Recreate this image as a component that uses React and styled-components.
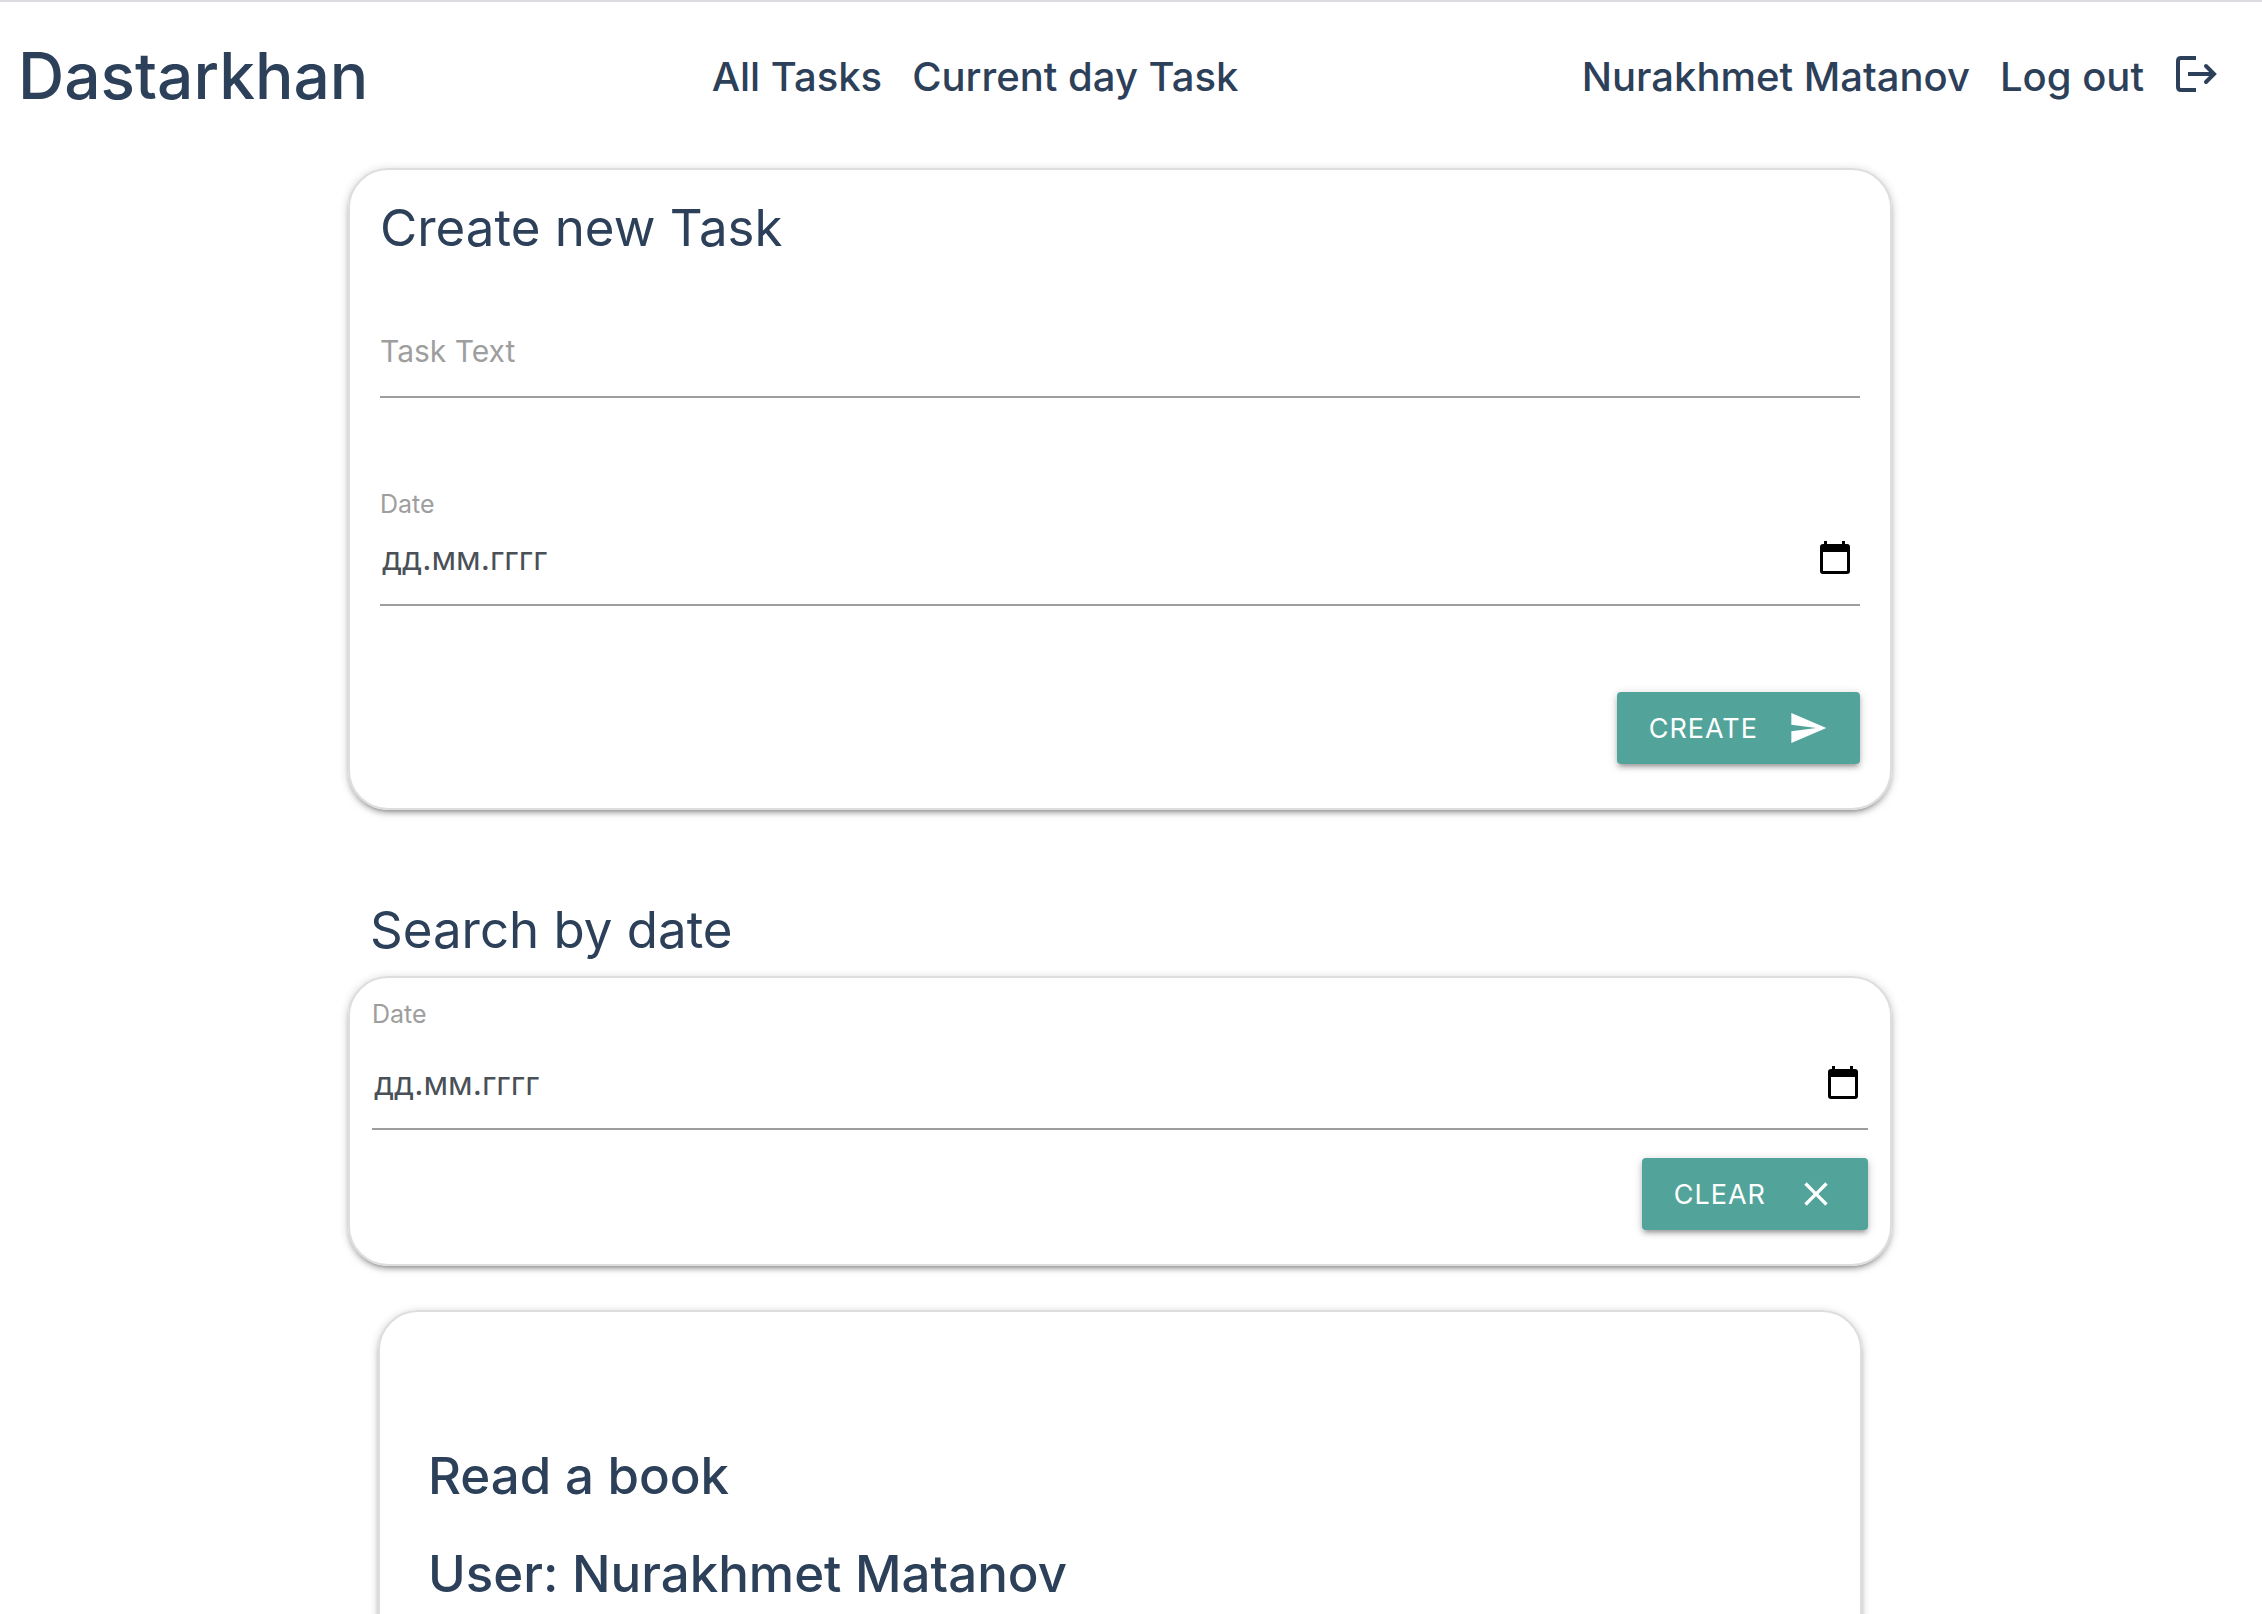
import React, { useState } from "react";
import styled, { createGlobalStyle } from "styled-components";

const Global = createGlobalStyle`
  * { box-sizing: border-box; }
  body {
    margin: 0;
    background: #fff;
    color: #2d4059;
    font-family: Inter, "Open Sans", "Liberation Sans", sans-serif;
  }
`;

const Page = styled.div`
  border-top: 2px solid #dcdbe0;
  padding-right: 22px;
  height: 100vh;
  overflow: hidden;
`;

const Header = styled.header`
  display: flex;
  justify-content: space-between;
  align-items: center;
  height: 148px;
  padding: 0 22px 0 18px;
`;

const Brand = styled.a`
  color: inherit;
  text-decoration: none;
  font-size: 64px;
  line-height: 76px;
  font-weight: 500;
`;

const Nav = styled.nav`
  display: flex;
  align-items: center;
  gap: 30px;
`;

const NavLink = styled.a`
  display: flex;
  align-items: center;
  gap: 30px;
  color: inherit;
  text-decoration: none;
  font-size: 40px;
  font-weight: 500;
`;

const Main = styled.main`
  width: 70%;
  margin: 0 auto;
  padding: 18px 12px 0;
`;

const Card = styled.section`
  display: flex;
  flex-direction: column;
  margin: ${(p) => p.$margin || "0"};
  padding: ${(p) => p.$padding};
  border: 2px solid #ddd;
  border-radius: 40px;
  box-shadow: 0 4px 4px rgba(0, 0, 0, 0.14), 0 6px 2px -4px rgba(0, 0, 0, 0.12),
    0 2px 10px rgba(0, 0, 0, 0.2);
`;

const Heading = styled.h2`
  margin: 0;
  font-size: 51px;
  line-height: 60px;
  font-weight: 400;
`;

const SearchHeading = styled(Heading)`
  margin: 90px 22px 16px;
`;

const Field = styled.div`
  display: flex;
  flex-direction: column;
  margin-top: ${(p) => p.$top};
`;

const Label = styled.label`
  color: #9e9e9e;
  font-size: 25px;
  line-height: 32px;
  font-weight: 400;
`;

const Control = styled.div`
  display: flex;
  align-items: center;
  height: ${(p) => p.$height};
  padding: ${(p) => p.$padding};
  border-bottom: 2px solid #9e9e9e;
`;

const Input = styled.input`
  flex: 1;
  min-width: 0;
  padding: ${(p) => (p.$date ? "0 2px" : "0")};
  border: 0;
  outline: 0;
  background: none;
  color: #495057;
  font-family: inherit;
  font-size: ${(p) => (p.$date ? "32px" : "30px")};
  font-weight: 400;
  &::placeholder {
    color: ${(p) => (p.$date ? "#495057" : "#9e9e9e")};
    opacity: 1;
  }
`;

const IconButton = styled.button`
  display: flex;
  padding: 0;
  border: 0;
  background: none;
  color: #000;
  cursor: pointer;
`;

const Button = styled.button`
  display: flex;
  align-items: center;
  align-self: flex-end;
  gap: 30px;
  height: 72px;
  margin-top: ${(p) => p.$top};
  padding: 0 32px;
  border: 0;
  border-radius: 4px;
  background: #52a49a;
  color: #fff;
  font-family: inherit;
  font-size: 27px;
  font-weight: 400;
  letter-spacing: 1px;
  cursor: pointer;
  box-shadow: 0 4px 4px rgba(0, 0, 0, 0.14), 0 6px 2px -4px rgba(0, 0, 0, 0.12),
    0 2px 10px rgba(0, 0, 0, 0.2);
`;

const TaskLine = styled.p`
  margin: 0 0 38px;
  font-size: 51px;
  line-height: 60px;
  font-weight: 500;
`;

const LogoutIcon = () => (
  <svg width="44" height="44" viewBox="0 0 44 44" fill="none" stroke="currentColor" strokeWidth="4" aria-hidden="true">
    <path d="M22 4H7Q4 4 4 7V33Q4 36 7 36H22" />
    <path d="M14 20H39" />
    <path d="M32 12L40 20L32 28" strokeLinecap="round" />
  </svg>
);

const CalendarIcon = () => (
  <svg width="34" height="36" viewBox="0 0 34 36" fill="currentColor" aria-hidden="true">
    <path fillRule="evenodd" d="M6 1H9V4H24V1H27V4H29Q32 4 32 7V31Q32 34 29 34H5Q2 34 2 31V7Q2 4 5 4H6ZM5 12V31H29V12Z" />
  </svg>
);

const SendIcon = () => (
  <svg width="40" height="40" viewBox="0 0 24 24" fill="currentColor" aria-hidden="true">
    <path d="M2.01 21L23 12 2.01 3 2 10l15 2-15 2z" />
  </svg>
);

const CloseIcon = () => (
  <svg width="40" height="40" viewBox="0 0 24 24" fill="currentColor" aria-hidden="true">
    <path d="M19 6.41L17.59 5 12 10.59 6.41 5 5 6.41 10.59 12 5 17.59 6.41 19 12 13.41 17.59 19 19 17.59 13.41 12z" />
  </svg>
);

function DateField({ id, top, height, padding, value, onChange }) {
  return (
    <Field $top={top}>
      <Label htmlFor={id}>Date</Label>
      <Control $height={height} $padding={padding}>
        <Input id={id} $date placeholder="дд.мм.гггг" value={value} onChange={(e) => onChange(e.target.value)} />
        <IconButton type="button" aria-label="Open calendar">
          <CalendarIcon />
        </IconButton>
      </Control>
    </Field>
  );
}

export default function App() {
  const [text, setText] = useState("");
  const [date, setDate] = useState("");
  const [search, setSearch] = useState("");
  return (
    <Page>
      <Global />
      <Header>
        <Brand href="#">Dastarkhan</Brand>
        <Nav>
          <NavLink href="#all">All Tasks</NavLink>
          <NavLink href="#today">Current day Task</NavLink>
        </Nav>
        <Nav>
          <NavLink href="#profile">Nurakhmet Matanov</NavLink>
          <NavLink href="#logout">
            Log out
            <LogoutIcon />
          </NavLink>
        </Nav>
      </Header>
      <Main>
        <Card $padding="28px 30px 44px">
          <Heading>Create new Task</Heading>
          <Field $top="60px">
            <Control $height="80px" $padding="0 0 12px">
              <Input aria-label="Task Text" placeholder="Task Text" value={text} onChange={(e) => setText(e.target.value)} />
            </Control>
          </Field>
          <DateField id="task-date" top="90px" height="86px" padding="0 8px 8px 0" value={date} onChange={setDate} />
          <Button type="button" $top="86px">
            CREATE
            <SendIcon />
          </Button>
        </Card>
        <SearchHeading>Search by date</SearchHeading>
        <Card $padding="20px 22px 34px">
          <DateField id="search-date" top="0" height="100px" padding="8px 8px 0 0" value={search} onChange={setSearch} />
          <Button type="button" $top="28px" onClick={() => setSearch("")}>
            CLEAR
            <CloseIcon />
          </Button>
        </Card>
        <Card as="article" $margin="44px 30px 0" $padding="134px 48px 60px">
          <TaskLine>Read a book</TaskLine>
          <TaskLine>User: Nurakhmet Matanov</TaskLine>
        </Card>
      </Main>
    </Page>
  );
}
